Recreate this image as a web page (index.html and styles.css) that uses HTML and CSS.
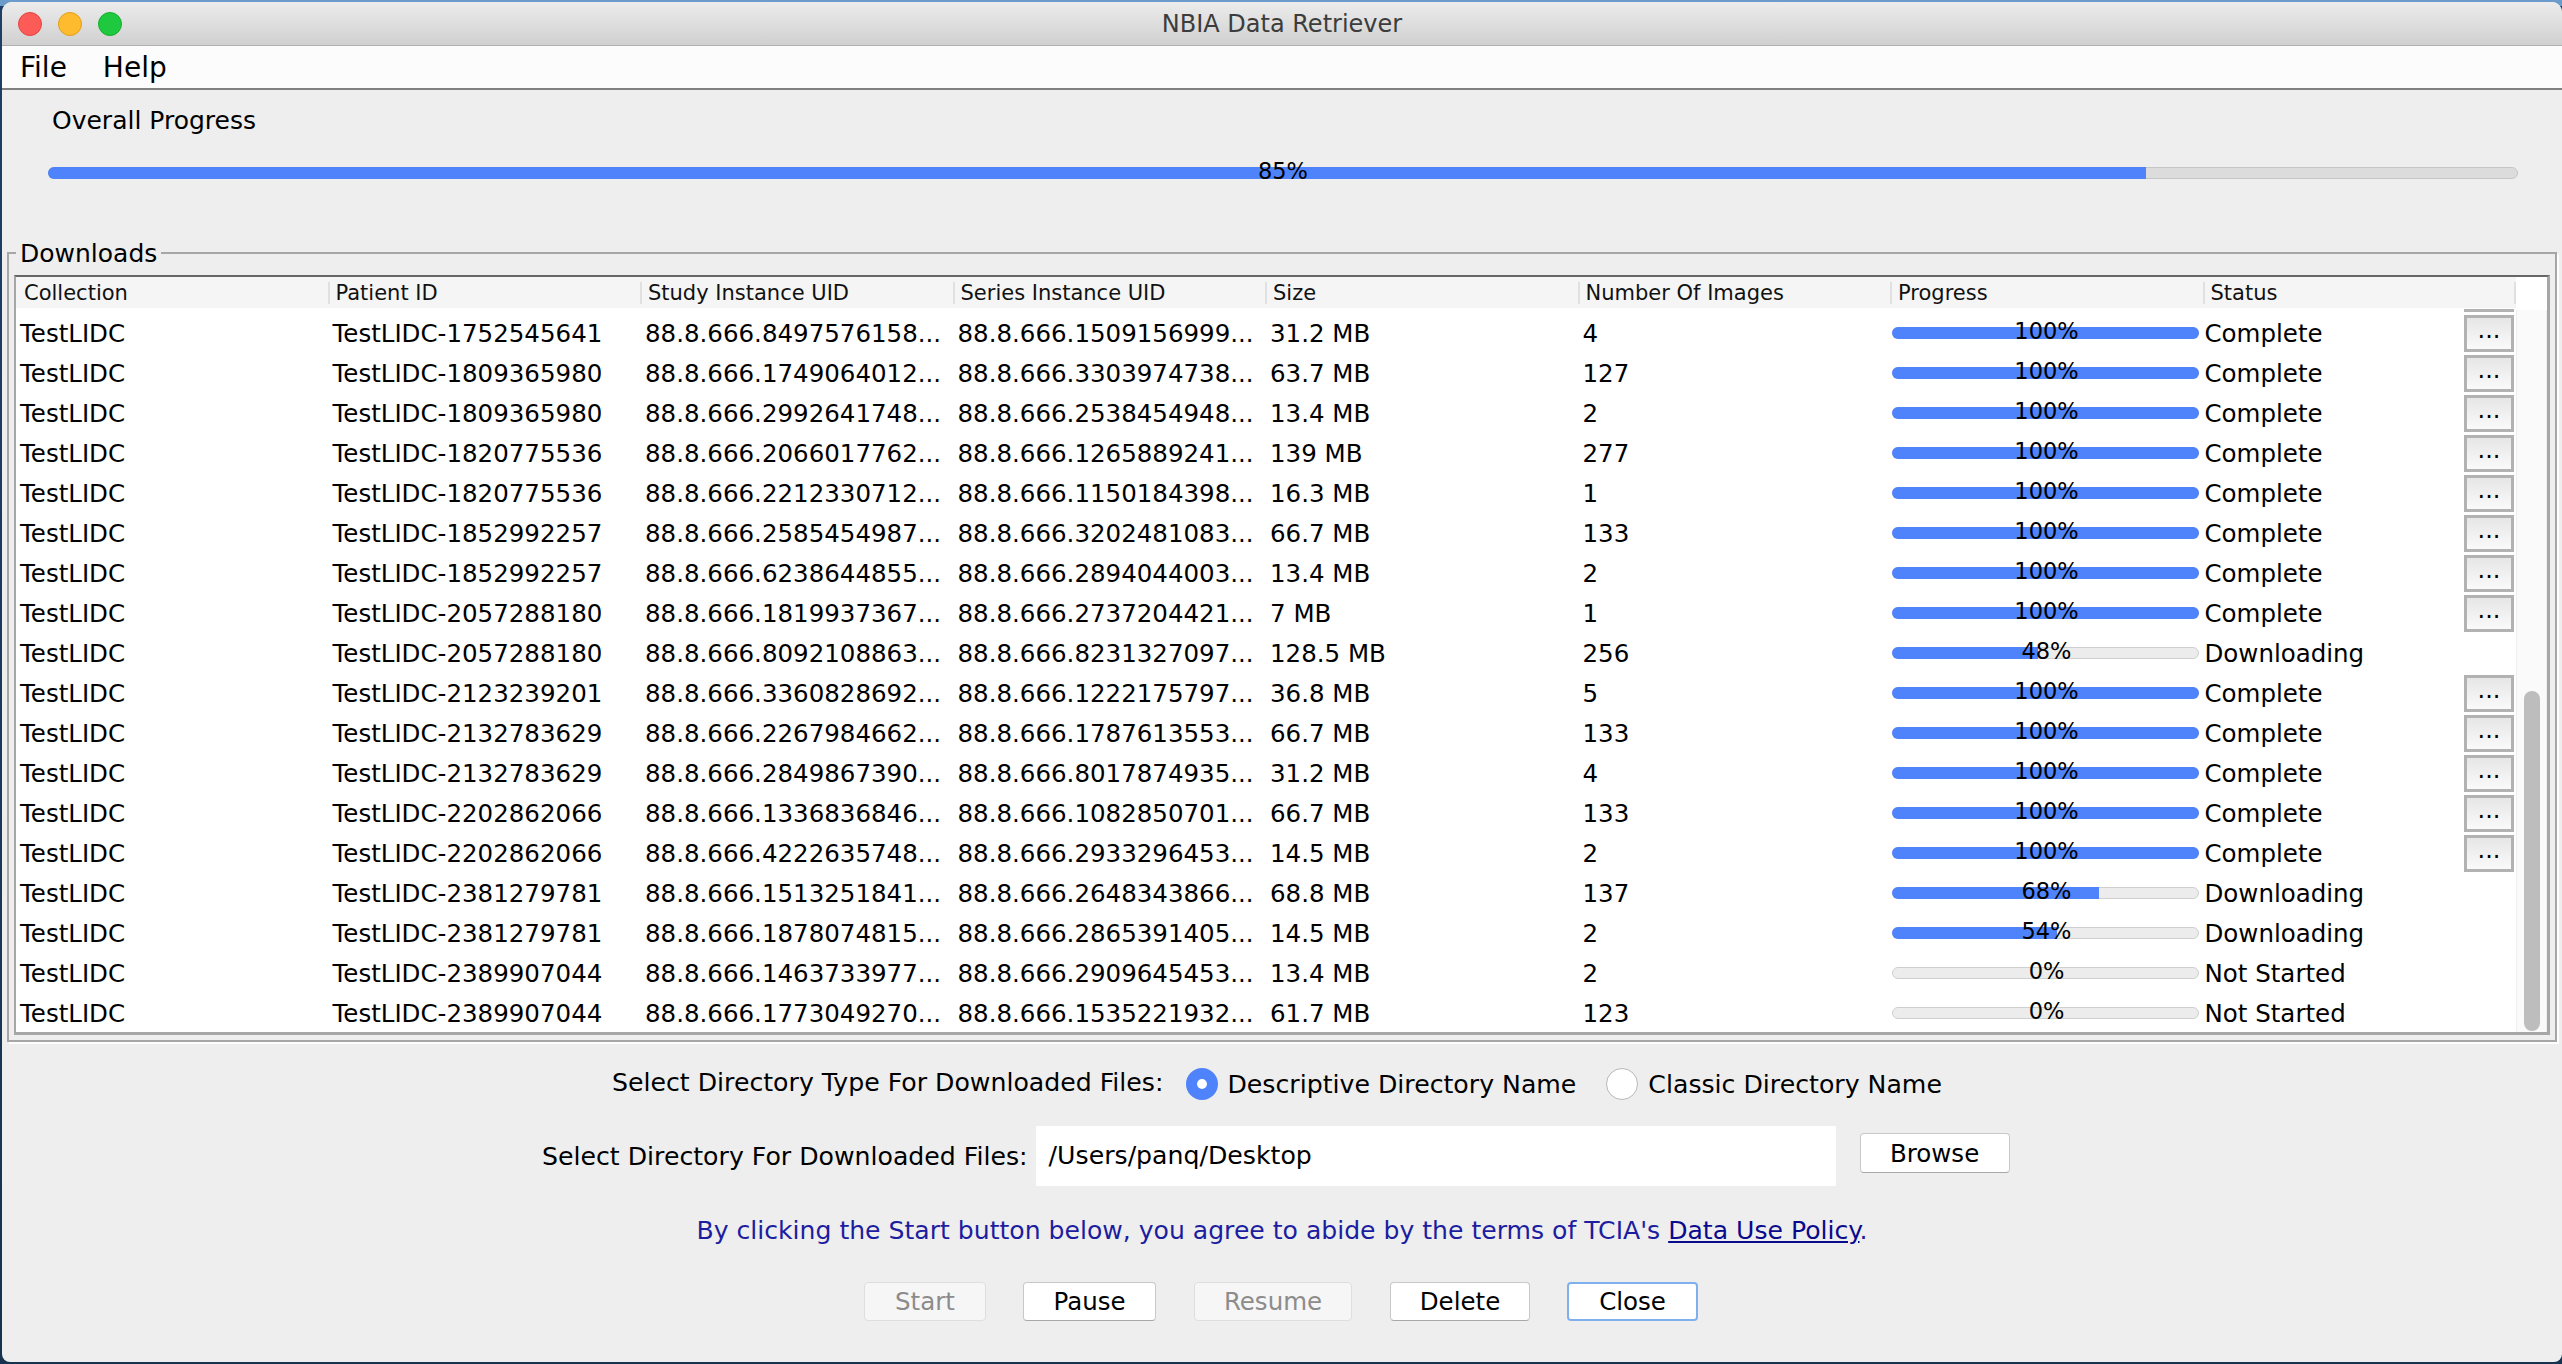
FILE: index.html
```html
<!DOCTYPE html>
<html lang="en">
<head>
    <meta charset="utf-8">
    <title>NBIA Data Retriever</title>
    <link rel="stylesheet" href="styles.css">
</head>
<body>
<div class="window">
    <!-- title bar -->
    <header class="titlebar">
        <div class="lights">
            <span class="light light-close"></span>
            <span class="light light-min"></span>
            <span class="light light-max"></span>
        </div>
        <div class="title">NBIA Data Retriever</div>
    </header>

    <nav class="menubar">
        <span>File</span>
        <span>Help</span>
    </nav>

    <!-- overall progress -->
    <section class="overall">
        <div class="overall-label">Overall Progress</div>
        <div class="bar bar-overall">
            <div class="bar-fill" style="width: 85%"></div>
            <span class="bar-text">85%</span>
        </div>
    </section>

    <!-- downloads table -->
    <section class="downloads">
        <div class="downloads-title">Downloads</div>
        <div class="table-box">
            <div class="table-main">
                <div class="table-head">
                    <div>Collection</div>
                    <div>Patient ID</div>
                    <div>Study Instance UID</div>
                    <div>Series Instance UID</div>
                    <div>Size</div>
                    <div>Number Of Images</div>
                    <div>Progress</div>
                    <div>Status</div>
                </div>
                <div class="table-rows">
                    <div class="prev-tail"><span></span></div>

                    <div class="row"><div>TestLIDC</div><div>TestLIDC-1752545641</div><div>88.8.666.8497576158...</div><div>88.8.666.1509156999...</div><div>31.2 MB</div><div>4</div><div class="bar"><div class="bar-fill" style="width: 100%"></div><span class="bar-text">100%</span></div><div class="status">Complete</div><button class="more">...</button></div>
                    <div class="row"><div>TestLIDC</div><div>TestLIDC-1809365980</div><div>88.8.666.1749064012...</div><div>88.8.666.3303974738...</div><div>63.7 MB</div><div>127</div><div class="bar"><div class="bar-fill" style="width: 100%"></div><span class="bar-text">100%</span></div><div class="status">Complete</div><button class="more">...</button></div>
                    <div class="row"><div>TestLIDC</div><div>TestLIDC-1809365980</div><div>88.8.666.2992641748...</div><div>88.8.666.2538454948...</div><div>13.4 MB</div><div>2</div><div class="bar"><div class="bar-fill" style="width: 100%"></div><span class="bar-text">100%</span></div><div class="status">Complete</div><button class="more">...</button></div>
                    <div class="row"><div>TestLIDC</div><div>TestLIDC-1820775536</div><div>88.8.666.2066017762...</div><div>88.8.666.1265889241...</div><div>139 MB</div><div>277</div><div class="bar"><div class="bar-fill" style="width: 100%"></div><span class="bar-text">100%</span></div><div class="status">Complete</div><button class="more">...</button></div>
                    <div class="row"><div>TestLIDC</div><div>TestLIDC-1820775536</div><div>88.8.666.2212330712...</div><div>88.8.666.1150184398...</div><div>16.3 MB</div><div>1</div><div class="bar"><div class="bar-fill" style="width: 100%"></div><span class="bar-text">100%</span></div><div class="status">Complete</div><button class="more">...</button></div>
                    <div class="row"><div>TestLIDC</div><div>TestLIDC-1852992257</div><div>88.8.666.2585454987...</div><div>88.8.666.3202481083...</div><div>66.7 MB</div><div>133</div><div class="bar"><div class="bar-fill" style="width: 100%"></div><span class="bar-text">100%</span></div><div class="status">Complete</div><button class="more">...</button></div>
                    <div class="row"><div>TestLIDC</div><div>TestLIDC-1852992257</div><div>88.8.666.6238644855...</div><div>88.8.666.2894044003...</div><div>13.4 MB</div><div>2</div><div class="bar"><div class="bar-fill" style="width: 100%"></div><span class="bar-text">100%</span></div><div class="status">Complete</div><button class="more">...</button></div>
                    <div class="row"><div>TestLIDC</div><div>TestLIDC-2057288180</div><div>88.8.666.1819937367...</div><div>88.8.666.2737204421...</div><div>7 MB</div><div>1</div><div class="bar"><div class="bar-fill" style="width: 100%"></div><span class="bar-text">100%</span></div><div class="status">Complete</div><button class="more">...</button></div>
                    <div class="row"><div>TestLIDC</div><div>TestLIDC-2057288180</div><div>88.8.666.8092108863...</div><div>88.8.666.8231327097...</div><div>128.5 MB</div><div>256</div><div class="bar"><div class="bar-fill" style="width: 48%"></div><span class="bar-text">48%</span></div><div class="status">Downloading</div></div>
                    <div class="row"><div>TestLIDC</div><div>TestLIDC-2123239201</div><div>88.8.666.3360828692...</div><div>88.8.666.1222175797...</div><div>36.8 MB</div><div>5</div><div class="bar"><div class="bar-fill" style="width: 100%"></div><span class="bar-text">100%</span></div><div class="status">Complete</div><button class="more">...</button></div>
                    <div class="row"><div>TestLIDC</div><div>TestLIDC-2132783629</div><div>88.8.666.2267984662...</div><div>88.8.666.1787613553...</div><div>66.7 MB</div><div>133</div><div class="bar"><div class="bar-fill" style="width: 100%"></div><span class="bar-text">100%</span></div><div class="status">Complete</div><button class="more">...</button></div>
                    <div class="row"><div>TestLIDC</div><div>TestLIDC-2132783629</div><div>88.8.666.2849867390...</div><div>88.8.666.8017874935...</div><div>31.2 MB</div><div>4</div><div class="bar"><div class="bar-fill" style="width: 100%"></div><span class="bar-text">100%</span></div><div class="status">Complete</div><button class="more">...</button></div>
                    <div class="row"><div>TestLIDC</div><div>TestLIDC-2202862066</div><div>88.8.666.1336836846...</div><div>88.8.666.1082850701...</div><div>66.7 MB</div><div>133</div><div class="bar"><div class="bar-fill" style="width: 100%"></div><span class="bar-text">100%</span></div><div class="status">Complete</div><button class="more">...</button></div>
                    <div class="row"><div>TestLIDC</div><div>TestLIDC-2202862066</div><div>88.8.666.4222635748...</div><div>88.8.666.2933296453...</div><div>14.5 MB</div><div>2</div><div class="bar"><div class="bar-fill" style="width: 100%"></div><span class="bar-text">100%</span></div><div class="status">Complete</div><button class="more">...</button></div>
                    <div class="row"><div>TestLIDC</div><div>TestLIDC-2381279781</div><div>88.8.666.1513251841...</div><div>88.8.666.2648343866...</div><div>68.8 MB</div><div>137</div><div class="bar"><div class="bar-fill" style="width: 68%"></div><span class="bar-text">68%</span></div><div class="status">Downloading</div></div>
                    <div class="row"><div>TestLIDC</div><div>TestLIDC-2381279781</div><div>88.8.666.1878074815...</div><div>88.8.666.2865391405...</div><div>14.5 MB</div><div>2</div><div class="bar"><div class="bar-fill" style="width: 54%"></div><span class="bar-text">54%</span></div><div class="status">Downloading</div></div>
                    <div class="row"><div>TestLIDC</div><div>TestLIDC-2389907044</div><div>88.8.666.1463733977...</div><div>88.8.666.2909645453...</div><div>13.4 MB</div><div>2</div><div class="bar"><span class="bar-text">0%</span></div><div class="status">Not Started</div></div>
                    <div class="row"><div>TestLIDC</div><div>TestLIDC-2389907044</div><div>88.8.666.1773049270...</div><div>88.8.666.1535221932...</div><div>61.7 MB</div><div>123</div><div class="bar"><span class="bar-text">0%</span></div><div class="status">Not Started</div></div>
                </div>
            </div>
            <div class="scroll-track"><div class="scroll-thumb"></div></div>
        </div>
    </section>

    <!-- options -->
    <section class="options">
        <div class="option-row type-row">
            <span class="type-label">Select Directory Type For Downloaded Files:</span>
            <span class="radio radio-on"></span>
            <span class="radio-label">Descriptive Directory Name</span>
            <span class="radio radio-off"></span>
            <span class="radio-label">Classic Directory Name</span>
        </div>
        <div class="option-row dir-row">
            <span>Select Directory For Downloaded Files:</span>
            <div class="dir-input">/Users/panq/Desktop</div>
            <button class="btn btn-browse">Browse</button>
        </div>
        <div class="policy">By clicking the Start button below, you agree to abide by the terms of TCIA's <a href="#">Data Use Policy</a>.</div>
        <div class="actions">
            <button class="btn btn-start" disabled>Start</button>
            <button class="btn btn-pause">Pause</button>
            <button class="btn btn-resume" disabled>Resume</button>
            <button class="btn btn-delete">Delete</button>
            <button class="btn btn-close">Close</button>
        </div>
    </section>
</div>
</body>
</html>
```

FILE: styles.css
```css
html, body {
    margin: 0;
    height: 1364px;
    overflow: hidden;
}

body {
    background: linear-gradient(to bottom, #6c9ccb 0, #6c9ccb 6px, #1d3f66 6px, #17324f 100%);
    font-family: "DejaVu Sans", "Liberation Sans", sans-serif;
    font-size: 24.5px;
    color: #000;
}

.window {
    margin: 2px 0 0 2px;
    width: 2560px;
    height: 1360px;
    background: #eeeeee;
    border-radius: 10px 10px 8px 8px;
    overflow: hidden;
    display: flex;
    flex-direction: column;
}

/* title bar */
.titlebar {
    height: 43px;
    flex: none;
    display: flex;
    align-items: center;
    position: relative;
    background: linear-gradient(to bottom, #ececec, #d0d0d0);
    border-bottom: 1px solid #b0b0b0;
}

.lights {
    display: flex;
    gap: 16px;
    padding-left: 16px;
}

.light {
    width: 24px;
    height: 24px;
    border-radius: 50%;
    box-sizing: border-box;
}

.light-close { background: #fc5b57; border: 1px solid #e2463f; }
.light-min { background: #ffbb2e; border: 1px solid #e09e1a; }
.light-max { background: #1fc93f; border: 1px solid #14ae2b; }

.title {
    position: absolute;
    left: 0;
    right: 0;
    text-align: center;
    font-size: 24px;
    color: #3c3c3c;
}

.menubar {
    height: 42px;
    flex: none;
    display: flex;
    align-items: center;
    gap: 36px;
    padding-left: 18px;
    background: #fcfcfc;
    border-bottom: 2px solid #808080;
    font-size: 28px;
}

/* overall progress */
.overall {
    height: 162px;
    flex: none;
    box-sizing: border-box;
    padding: 15px 44px 0 46px;
}

.overall-label {
    padding-left: 4px;
    line-height: 32px;
    font-size: 25px;
}

.bar {
    position: relative;
    height: 12px;
    box-sizing: border-box;
    background: #ececec;
    border: 1px solid #cfcfcf;
    border-radius: 6px;
    overflow: visible;
}

.bar-overall {
    margin-top: 30px;
    background: #dcdcdc;
    border-color: #c6c6c6;
}

.bar-fill {
    height: 12px;
    margin: -1px;
    background: #4f83fb;
    border-radius: 6px 0 0 6px;
}

.bar-fill[style*="100%"] {
    width: auto !important;
    border-radius: 6px;
}

.bar-text {
    position: absolute;
    left: 2px;
    right: 0;
    top: -12px;
    line-height: 30px;
    text-align: center;
    font-size: 22.5px;
    white-space: nowrap;
}

.bar-overall .bar-text {
    left: 0;
}

/* downloads panel */
.downloads {
    position: relative;
    flex: none;
    height: 790px;
    box-sizing: border-box;
    margin: 0 5px;
    padding: 21px 5px 5px 5px;
    border: 2px solid #a6a6a6;
    box-shadow: 2px 2px 0 #fff;
}

.downloads-title {
    position: absolute;
    left: 7px;
    top: -16px;
    padding: 0 4px;
    line-height: 32px;
    background: #eeeeee;
    font-size: 25px;
}

.table-box {
    height: 760px;
    display: flex;
    background: #fff;
    border: solid #a6a6a6;
    border-width: 2px 3px 3px 2px;
    border-top-color: #666;
    box-sizing: border-box;
}

.table-main {
    width: 2500px;
    flex: none;
}

.table-head {
    height: 31px;
    display: grid;
    grid-template-columns: repeat(8, 312.5px);
    align-items: center;
    background: #f5f5f5;
    font-size: 21px;
    color: #111;
}

.table-head > div {
    height: 22px;
    line-height: 22px;
    padding-left: 6px;
    border-left: 2px solid #e0e0e0;
    margin-left: -1px;
    white-space: nowrap;
}

.table-head > div:first-child {
    border-left: 0;
    padding-left: 9px;
}

.table-head > div:last-child {
    border-right: 2px solid #e0e0e0;
}

.table-rows {
    overflow: hidden;
}

.prev-tail {
    height: 5px;
    display: flex;
    justify-content: flex-end;
    padding-right: 2px;
}

.prev-tail span {
    width: 50px;
    height: 4px;
    border-bottom: 3px solid #b2b2b2;
    box-sizing: border-box;
}

.row {
    height: 40px;
    display: grid;
    grid-template-columns: repeat(7, 312.5px) 260.5px 50px 2px;
    align-items: center;
    white-space: nowrap;
}

.row > div {
    padding-left: 4px;
    overflow: hidden;
}

.row > .bar {
    margin: -1px 4.5px 0 1px;
    padding: 0;
    overflow: visible;
}

.row > .status {
    padding-left: 1px;
    grid-column: 8;
}

.more {
    grid-column: 9;
    width: 50px;
    height: 37px;
    padding: 0 0 6px;
    box-sizing: border-box;
    border: 3px solid #b2b2b2;
    background: linear-gradient(to bottom, #e6e6e6, #fafafa);
    font-family: inherit;
    font-size: 24px;
    line-height: 1;
    color: #000;
}

.scroll-track {
    position: relative;
    flex: 1;
    margin-top: 33px;
    background: #fafafa;
    border-left: 1px solid #efefef;
    border-right: 1px solid #efefef;
}

.scroll-thumb {
    position: absolute;
    left: 7px;
    width: 16px;
    top: 381px;
    bottom: 1px;
    background: #bdbdbd;
    border-radius: 8px;
}

/* options below the table */
.options {
    flex: 1;
    box-sizing: border-box;
    padding-top: 22px;
    display: flex;
    flex-direction: column;
    align-items: center;
    font-size: 25.2px;
}

.option-row {
    display: flex;
    align-items: center;
    white-space: nowrap;
}

.type-row {
    height: 40px;
    align-self: flex-start;
    margin-left: 610px;
}

.type-label {
    margin-top: -3px;
}

.radio {
    width: 32px;
    height: 32px;
    box-sizing: border-box;
    border-radius: 50%;
    background: #fff;
    border: 1px solid #b8b8b8;
}

.radio-on {
    margin-left: 23px;
    border: 11px solid #4f83fb;
}

.radio-off {
    margin-left: 30px;
}

.radio-label {
    margin-left: 9px;
}

.radio-off + .radio-label {
    margin-left: 10px;
}

.dir-row {
    height: 60px;
    margin-top: 22px;
    align-self: flex-start;
    margin-left: 540px;
}

.dir-input {
    width: 800px;
    height: 60px;
    line-height: 60px;
    box-sizing: border-box;
    padding-left: 13px;
    margin-left: 8px;
    background: #fff;
}

.btn {
    height: 39px;
    padding: 0;
    box-sizing: border-box;
    border: 1px solid #c8c8c8;
    border-bottom-color: #a8a8a8;
    border-radius: 4px;
    background: #fff;
    font-family: inherit;
    font-size: 24.5px;
    color: #000;
}

.btn[disabled] {
    background: #f6f6f6;
    border-color: #dedede;
    color: #8c8c8c;
}

.btn-browse {
    width: 150px;
    margin: -6px 0 0 24px;
    height: 40px;
}

.policy {
    margin-top: 27px;
    line-height: 36px;
    font-size: 25.1px;
    color: #1d1da0;
}

.policy a {
    color: #0a0a8c;
}

.actions {
    display: flex;
    margin-top: 33px;
    align-self: flex-start;
    margin-left: 862px;
}

.btn-start { width: 122px; }
.btn-pause { width: 133px; margin-left: 37px; }
.btn-resume { width: 158px; margin-left: 38px; }
.btn-delete { width: 140px; margin-left: 38px; }

.btn-close {
    width: 131px;
    margin-left: 37px;
    border: 2px solid #7fb0ee;
}
```
